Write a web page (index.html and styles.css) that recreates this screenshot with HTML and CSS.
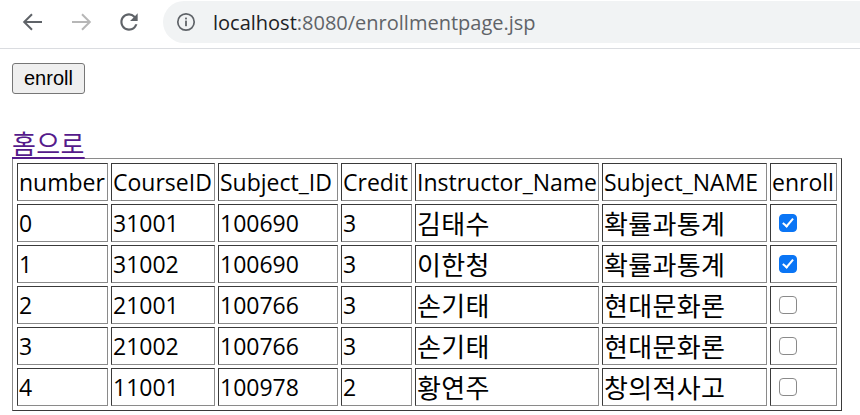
FILE: index.html
```html
<!DOCTYPE html>
<html lang="ko">
<head>
<meta charset="utf-8">
<title>enrollmentpage</title>
<link rel="stylesheet" href="styles.css">
</head>
<body>
<div class="chrome">
  <div class="nav">
    <span class="navbtn">
      <svg width="24" height="24" viewBox="0 0 24 24"><path d="M21 12H3.5M11 4.2L3.2 12l7.8 7.8" fill="none" stroke="#5f6368" stroke-width="2"/></svg>
    </span>
    <span class="navbtn">
      <svg width="24" height="24" viewBox="0 0 24 24"><path d="M3 12h17.5M13 4.2l7.8 7.8-7.8 7.8" fill="none" stroke="#b7b7b7" stroke-width="2"/></svg>
    </span>
    <span class="navbtn">
      <svg width="26" height="26" viewBox="0 0 24 24"><path d="M17.65 6.35A7.958 7.958 0 0 0 12 4c-4.42 0-7.99 3.58-7.99 8s3.57 8 7.99 8c3.730 0 6.84-2.55 7.73-6h-2.08A5.99 5.99 0 0 1 12 18c-3.31 0-6-2.69-6-6s2.690-6 6-6c1.66 0 3.14.69 4.22 1.78L13 11h7V4l-2.35 2.35z" fill="#5f6368"/></svg>
    </span>
  </div>
  <div class="omni">
    <svg class="info" width="20" height="20" viewBox="0 0 20 20"><circle cx="10" cy="10" r="8.2" fill="none" stroke="#5f6368" stroke-width="1.7"/><rect x="9.1" y="8.6" width="1.8" height="5.6" fill="#5f6368"/><rect x="9.1" y="5.6" width="1.8" height="1.8" fill="#5f6368"/></svg>
    <span class="url"><span class="host">localhost</span>:8080/enrollmentpage.jsp</span>
  </div>
</div>
<main class="page">
  <form class="enroll-form">
    <button type="button" class="btn">enroll</button>
    <div class="home"><a class="home-link" href="#">홈으로</a></div>
    <table class="grid">
      <tr>
        <td class="w1">number</td>
        <td class="w2">CourseID</td>
        <td class="w3">Subject_ID</td>
        <td class="w4">Credit</td>
        <td class="w5">Instructor_Name</td>
        <td class="w6">Subject_NAME</td>
        <td class="w7">enroll</td>
      </tr>
      <tr>
        <td>0</td><td>31001</td><td>100690</td><td>3</td>
        <td class="ko">김태수</td><td class="ko">확률과통계</td>
        <td class="cbx"><input class="chk" type="checkbox" checked></td>
      </tr>
      <tr>
        <td>1</td><td>31002</td><td>100690</td><td>3</td>
        <td class="ko">이한청</td><td class="ko">확률과통계</td>
        <td class="cbx"><input class="chk" type="checkbox" checked></td>
      </tr>
      <tr>
        <td>2</td><td>21001</td><td>100766</td><td>3</td>
        <td class="ko">손기태</td><td class="ko">현대문화론</td>
        <td class="cbx"><input class="chk" type="checkbox"></td>
      </tr>
      <tr>
        <td>3</td><td>21002</td><td>100766</td><td>3</td>
        <td class="ko">손기태</td><td class="ko">현대문화론</td>
        <td class="cbx"><input class="chk" type="checkbox"></td>
      </tr>
      <tr>
        <td>4</td><td>11001</td><td>100978</td><td>2</td>
        <td class="ko">황연주</td><td class="ko">창의적사고</td>
        <td class="cbx"><input class="chk" type="checkbox"></td>
      </tr>
    </table>
  </form>
</main>
</body>
</html>
```
FILE: styles.css
```css
html, body {
  margin: 0;
  padding: 0;
  background: #ffffff;
}

body {
  font-family: "Open Sans", "Noto Sans CJK KR", sans-serif;
  color: #000;
}

.chrome {
  height: 48px;
  border-bottom: 1px solid #dadce0;
  display: flex;
  align-items: flex-start;
  padding-left: 9px;
  background: #ffffff;
}

.nav {
  display: flex;
  height: 44px;
  align-items: center;
}

.navbtn {
  width: 48px;
  height: 44px;
  display: flex;
  align-items: center;
  justify-content: center;
}

.omni {
  margin-left: 10px;
  margin-top: 1px;
  height: 42px;
  flex: 1;
  background: #f1f3f4;
  border-radius: 21px 0 0 21px;
  display: flex;
  align-items: center;
  padding-left: 13px;
}

.info {
  flex: none;
}

.url {
  margin-left: 17px;
  font-family: "Open Sans", sans-serif;
  font-size: 20px;
  color: #5f6368;
  white-space: nowrap;
}

.host {
  color: #202124;
}

.page {
  padding: 14px 12px 0 12px;
}

.btn {
  display: block;
  margin: 0;
  font-family: "Liberation Sans", Arial, sans-serif;
  font-size: 20px;
  line-height: 23px;
  padding: 3px 11px 3px 11px;
  background: #efefef;
  border: 1px solid #767676;
  border-radius: 3px;
  color: #000;
}

.home {
  margin-top: 34px;
  line-height: 30px;
  height: 30px;
}

.home-link {
  font-family: "Noto Sans CJK KR", sans-serif;
  font-size: 26px;
  letter-spacing: 0.3px;
  color: #551a8b;
  text-decoration-thickness: 2px;
  text-underline-offset: 3px;
}

.grid {
  box-sizing: border-box;
  width: 830px;
  table-layout: fixed;
  border-collapse: separate;
  border-spacing: 3px;
  padding: 1px;
  border: 1px solid;
  border-color: #8a8a8a #3a3a3a #3a3a3a #8a8a8a;
  font-family: "Open Sans", "Noto Sans CJK KR", sans-serif;
  font-size: 23px;
}

.grid td {
  border: 1px solid;
  border-color: #3a3a3a #8a8a8a #8a8a8a #3a3a3a;
  padding: 0 1px;
  height: 36px;
  line-height: 36px;
  vertical-align: middle;
  white-space: nowrap;
  overflow: hidden;
}

.grid .ko {
  font-family: "Noto Sans CJK KR", sans-serif;
  font-size: 26px;
  letter-spacing: 0.3px;
}

.grid .cbx {
  line-height: 0;
}

.w1, .w2, .w3, .w4, .w5, .w6, .w7 {
  box-sizing: border-box;
}
.w1 { width: 91px; }
.w2 { width: 104px; }
.w3 { width: 120px; }
.w4 { width: 71px; }
.w5 { width: 184px; }
.w6 { width: 165px; }
.w7 { width: 67px; }

.chk {
  -webkit-appearance: none;
  appearance: none;
  box-sizing: border-box;
  position: relative;
  display: inline-block;
  width: 18px;
  height: 18px;
  margin: 0 0 0 7px;
  border: 1.5px solid #8a8a8a;
  border-radius: 4px;
  background: #ffffff;
  vertical-align: middle;
}

.chk:checked {
  background: #0a75f5;
  border-color: #0a75f5;
}

.chk:checked::after {
  content: "";
  position: absolute;
  left: 5px;
  top: 1px;
  width: 4px;
  height: 9px;
  border: solid #ffffff;
  border-width: 0 2.5px 2.5px 0;
  transform: rotate(40deg);
}
```
